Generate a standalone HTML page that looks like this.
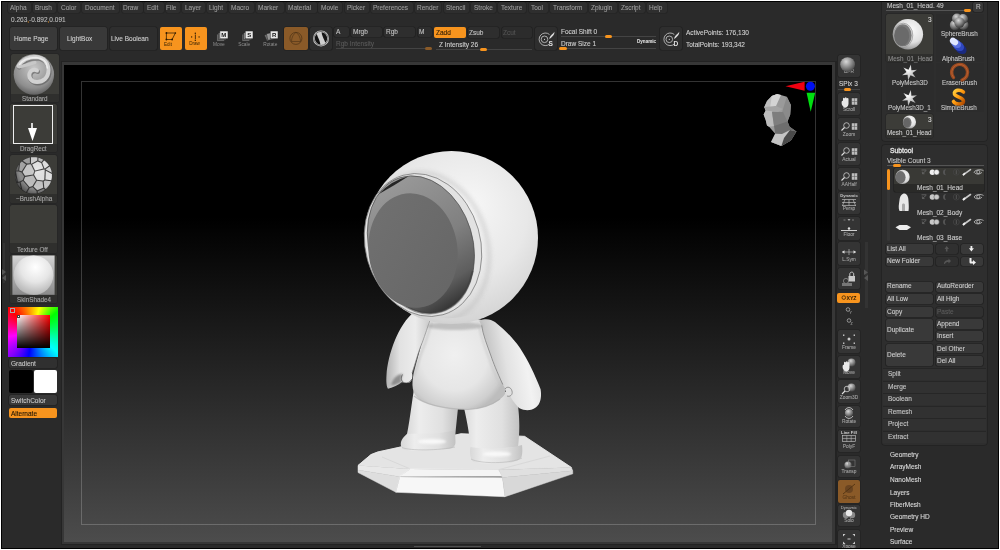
<!DOCTYPE html>
<html><head><meta charset="utf-8">
<style>
*{box-sizing:border-box;margin:0;padding:0}
html,body{width:1000px;height:550px;overflow:hidden;background:#fff}
body{position:relative;font-family:"Liberation Sans",sans-serif;color:#c4c4c4;font-size:6.5px;line-height:1}
.t{-webkit-text-stroke:0.1px currentColor;will-change:transform}
#app{position:absolute;left:1px;top:1px;width:998px;height:548px;background:#000}
#main{position:absolute;left:1px;top:1px;width:996px;height:546px;background:#2a2a2a;overflow:hidden}
.a{position:absolute}
.t{position:absolute;white-space:nowrap}
.menu{position:absolute;top:2px;height:11px;background:#2e2e2e;border-radius:2px;box-shadow:0 0 0 0.6px #222}
.mt{top:4.6px;color:#9c9c9c}
.btn{position:absolute;background:#393939;border-radius:2px;box-shadow:0 0 0 0.6px #1e1e1e}
.obtn{position:absolute;background:#f7941e;border-radius:2px}
.thumb{position:absolute;background:#3c3c38;border-radius:2px;overflow:hidden;box-shadow:0 0 0 0.5px #222}
.lab{position:absolute;left:0;right:0;bottom:0;background:#2f2f2d}
.lt{color:#a8a8a8;font-size:6.3px}
.lt2{color:#c8c8c8;font-size:6.5px}
.rsb{position:absolute;left:838px;width:22px;background:#343434;border-radius:2px;box-shadow:0 0 0 0.6px #202020}
.rsl{left:838px;width:22px;text-align:center;font-size:4.8px;color:#a0a0a0;margin-top:-0.8px}
.pan{position:absolute;left:882px;width:104.5px;background:#2e2e2e;border-radius:3px;box-shadow:0 0 0 0.8px #222}
.cell{position:absolute;width:48px;background:#2c2c2c;border-radius:2px}
.sb{position:absolute;background:#333;border-radius:2px}
</style></head><body>
<div id="app"><div id="main">
</div></div>

<!-- MENU -->
<div class="menu" style="left:8px;width:23px"></div><div class="t mt" style="left:9.9px">Alpha</div>
<div class="menu" style="left:33px;width:23px"></div><div class="t mt" style="left:34.9px">Brush</div>
<div class="menu" style="left:58px;width:22px"></div><div class="t mt" style="left:60.5px">Color</div>
<div class="menu" style="left:82px;width:37px"></div><div class="t mt" style="left:84.5px">Document</div>
<div class="menu" style="left:122px;width:21px"></div><div class="t mt" style="left:122.9px">Draw</div>
<div class="menu" style="left:144px;width:20px"></div><div class="t mt" style="left:146.7px">Edit</div>
<div class="menu" style="left:166px;width:14px"></div><div class="t mt" style="left:166.4px">File</div>
<div class="menu" style="left:182px;width:23px"></div><div class="t mt" style="left:184.5px">Layer</div>
<div class="menu" style="left:207px;width:20px"></div><div class="t mt" style="left:208.8px">Light</div>
<div class="menu" style="left:229px;width:25px"></div><div class="t mt" style="left:231.0px">Macro</div>
<div class="menu" style="left:256px;width:28px"></div><div class="t mt" style="left:258.4px">Marker</div>
<div class="menu" style="left:286px;width:31px"></div><div class="t mt" style="left:288.0px">Material</div>
<div class="menu" style="left:318px;width:24px"></div><div class="t mt" style="left:320.8px">Movie</div>
<div class="menu" style="left:345px;width:24px"></div><div class="t mt" style="left:346.9px">Picker</div>
<div class="menu" style="left:371px;width:42px"></div><div class="t mt" style="left:372.8px">Preferences</div>
<div class="menu" style="left:415px;width:26px"></div><div class="t mt" style="left:416.8px">Render</div>
<div class="menu" style="left:444px;width:25px"></div><div class="t mt" style="left:446.0px">Stencil</div>
<div class="menu" style="left:471px;width:25px"></div><div class="t mt" style="left:473.6px">Stroke</div>
<div class="menu" style="left:498px;width:28px"></div><div class="t mt" style="left:500.8px">Texture</div>
<div class="menu" style="left:529px;width:19px"></div><div class="t mt" style="left:531.0px">Tool</div>
<div class="menu" style="left:550px;width:37px"></div><div class="t mt" style="left:552.5px">Transform</div>
<div class="menu" style="left:589px;width:28px"></div><div class="t mt" style="left:590.9px">Zplugin</div>
<div class="menu" style="left:619px;width:26px"></div><div class="t mt" style="left:620.8px">Zscript</div>
<div class="menu" style="left:647px;width:20px"></div><div class="t mt" style="left:648.8px">Help</div>
<div class="t" style="left:11px;top:16.5px;color:#bdbdbd">0.263<span style="color:#e08a20">,</span>-0.892<span style="color:#e08a20">,</span>0.091</div>
<!-- TOP SHELF -->
<div class="btn" style="left:10px;top:27px;width:47px;height:23px"></div><div class="t" style="left:14px;top:36px;color:#d0d0d0">Home Page</div>
<div class="btn" style="left:60px;top:27px;width:47px;height:23px"></div><div class="t" style="left:67px;top:36px;color:#d0d0d0">LightBox</div>
<div class="btn" style="left:110px;top:27px;width:47px;height:23px;background:#2e2e2e"></div><div class="t" style="left:110.7px;top:36px;color:#d0d0d0">Live Boolean</div>
<div class="obtn" style="left:159.5px;top:27px;width:22.5px;height:23px"></div>
<div class="obtn" style="left:184.5px;top:27px;width:22.5px;height:23px"></div>
<div class="btn" style="left:284px;top:27px;width:23.5px;height:23px;background:#8a5a28"></div>
<div class="btn" style="left:309.6px;top:27px;width:22.4px;height:23px;background:#2e2e2e"></div>
<div class="btn" style="left:334.4px;top:26.5px;width:14.4px;height:10.5px;background:#2e2e2e"></div><div class="t" style="left:336px;top:29px">A</div>
<div class="btn" style="left:351.2px;top:26.5px;width:31.2px;height:10.5px;background:#2e2e2e"></div><div class="t" style="left:352.8px;top:29px">Mrgb</div>
<div class="btn" style="left:384px;top:26.5px;width:31.2px;height:10.5px;background:#2e2e2e"></div><div class="t" style="left:385.6px;top:29px">Rgb</div>
<div class="btn" style="left:417.6px;top:26.5px;width:14.4px;height:10.5px;background:#2e2e2e"></div><div class="t" style="left:418.9px;top:29px">M</div>
<div class="obtn" style="left:434.4px;top:27px;width:31.5px;height:10.6px"></div><div class="t" style="left:436px;top:29.5px;color:#2a1a05">Zadd</div>
<div class="btn" style="left:468px;top:27px;width:31px;height:10.6px;background:#2e2e2e"></div><div class="t" style="left:468.8px;top:30px">Zsub</div>
<div class="btn" style="left:501.6px;top:27px;width:30.4px;height:10.6px;background:#2c2c2c"></div><div class="t" style="left:502.9px;top:29.5px;color:#555">Zcut</div>
<div class="t" style="left:336px;top:40.5px;color:#5a5a5a">Rgb Intensity</div>
<div class="a" style="left:336px;top:47.5px;width:96px;height:1px;background:#444"></div>
<div class="a" style="left:424.8px;top:47px;width:7.2px;height:3px;background:#8a5a28;border-radius:1.5px"></div>
<div class="t" style="left:439.2px;top:42px;color:#d0d0d0">Z Intensity 26</div>
<div class="a" style="left:436px;top:49px;width:96px;height:1px;background:#444"></div>
<div class="a" style="left:480px;top:48px;width:7.2px;height:3px;background:#f7941e;border-radius:1.5px"></div>
<div class="btn" style="left:534.9px;top:27px;width:22.4px;height:23px;background:#2e2e2e"></div>
<div class="t" style="left:560.8px;top:28.5px;color:#d0d0d0">Focal Shift 0</div>
<div class="a" style="left:560.8px;top:36px;width:95px;height:1px;background:#444"></div>
<div class="a" style="left:604.8px;top:34.5px;width:7.5px;height:3.5px;background:#f7941e;border-radius:1.75px"></div>
<div class="t" style="left:560.8px;top:40.8px;color:#d0d0d0">Draw Size 1</div>
<div class="t" style="left:636.8px;top:40px;font-size:4.6px;font-weight:bold;color:#ddd">Dynamic</div>
<div class="a" style="left:560.8px;top:48px;width:95px;height:1px;background:#444"></div>
<div class="a" style="left:559.2px;top:47.2px;width:7.7px;height:3px;background:#f7941e;border-radius:1.5px"></div>
<div class="btn" style="left:659.7px;top:27px;width:22.7px;height:23px;background:#2e2e2e"></div>
<div class="t" style="left:685.9px;top:29.5px;color:#d0d0d0">ActivePoints: 176,130</div>
<div class="t" style="left:685.9px;top:41.5px;color:#d0d0d0">TotalPoints: 193,342</div>

<!-- CANVAS -->
<div class="a" style="left:60.5px;top:61px;width:776px;height:484px;background:#232323"></div>
<div class="a" style="left:61.5px;top:62px;width:773.5px;height:482px;background:#373737"></div>
<div class="a" style="left:64px;top:64.5px;width:768px;height:477px;background:linear-gradient(to bottom,#000 0%,#000 32%,#4c4c4c 100%)"></div>
<div class="a" style="left:80.5px;top:81px;width:735.5px;height:444px;border:1px solid rgba(255,255,255,0.2)"></div>
<div class="a" style="left:414px;top:545.8px;width:67px;height:1.6px;background:#505050"></div>

<!-- MODEL -->
<svg class="a" style="left:0;top:0" width="1000" height="550" viewBox="0 0 1000 550">
<defs>
<radialGradient id="gHead" cx="0.5" cy="0.4" r="0.7" fx="0.62" fy="0.3">
<stop offset="0" stop-color="#f6f6f6"/><stop offset="0.55" stop-color="#e8e8e8"/><stop offset="0.85" stop-color="#d6d6d6"/><stop offset="1" stop-color="#b8b8b8"/></radialGradient>
<linearGradient id="gDisc" x1="0.3" y1="0" x2="0.5" y2="1"><stop offset="0" stop-color="#9a9a9a"/><stop offset="0.55" stop-color="#808080"/><stop offset="0.85" stop-color="#5e5e5e"/><stop offset="1" stop-color="#383838"/></linearGradient>
<linearGradient id="gFace" x1="0" y1="0" x2="1" y2="1"><stop offset="0" stop-color="#717171"/><stop offset="1" stop-color="#656565"/></linearGradient>
<linearGradient id="gLeg" x1="0" y1="0" x2="1" y2="0"><stop offset="0" stop-color="#d8d8d8"/><stop offset="0.25" stop-color="#ededed"/><stop offset="0.7" stop-color="#e0e0e0"/><stop offset="1" stop-color="#c2c2c2"/></linearGradient>
<radialGradient id="gTorso" cx="0.45" cy="0.45" r="0.6"><stop offset="0" stop-color="#f0f0f0"/><stop offset="0.6" stop-color="#e6e6e6"/><stop offset="0.9" stop-color="#cfcfcf"/><stop offset="1" stop-color="#bdbdbd"/></radialGradient>
<linearGradient id="gArmL" x1="0" y1="0" x2="1" y2="0"><stop offset="0" stop-color="#b4b4b4"/><stop offset="0.3" stop-color="#e2e2e2"/><stop offset="0.65" stop-color="#ececec"/><stop offset="1" stop-color="#c8c8c8"/></linearGradient>
<linearGradient id="gArmR" x1="0" y1="0" x2="1" y2="-0.25"><stop offset="0" stop-color="#c0c0c0"/><stop offset="0.3" stop-color="#e2e2e2"/><stop offset="0.6" stop-color="#f2f2f2"/><stop offset="0.85" stop-color="#e2e2e2"/><stop offset="1" stop-color="#bcbcbc"/></linearGradient>
<clipPath id="cBot"><rect x="350" y="285" width="150" height="40"/></clipPath>
<clipPath id="cHead"><circle cx="451.5" cy="237.5" r="86.5"/></clipPath>
<filter id="blur1" x="-50%" y="-50%" width="200%" height="200%"><feGaussianBlur stdDeviation="1"/></filter>
<filter id="blur2" x="-20%" y="-20%" width="140%" height="140%"><feGaussianBlur stdDeviation="2"/></filter>
</defs>
<!-- base -->
<polygon points="358,465.5 371,454.6 377.7,452 461,433.8 524.6,436.4 571.4,467.5 498.6,469.7 410.2,468.9" fill="#e4e4e4" stroke="#e4e4e4" stroke-width="0.5" stroke-linejoin="round"/>
<path d="M358,465.5 L371,454.6 L377.7,452 L461,433.8 L524.6,436.4 L571.4,467.5" stroke="#f0f0f0" stroke-width="0.8" fill="none"/>
<path d="M410.2,468.9 L382,457 M498.6,469.7 L550,456" stroke="#d2d2d2" stroke-width="0.7"/>
<polygon points="358,465.5 410.2,468.9 399.8,476.7 358,470" fill="#e8e8e8" stroke="#e8e8e8" stroke-width="0.5" stroke-linejoin="round"/>
<polygon points="358,470 399.8,476.7 396,492.3 358,472.5" fill="#dedede" stroke="#dedede" stroke-width="0.5" stroke-linejoin="round"/>
<polygon points="410.2,468.9 498.6,469.7 502.5,476.3 399.8,476.2" fill="#f4f4f4" stroke="#f4f4f4" stroke-width="0.5" stroke-linejoin="round"/>
<polygon points="399.8,476.9 502.5,478 505,496.7 396,492.3" fill="#f7f7f7" stroke="#f7f7f7" stroke-width="0.5" stroke-linejoin="round"/>
<polygon points="498.6,469.7 571.4,467.5 572.7,470.8 502.5,477.5" fill="#e0e0e0" stroke="#e0e0e0" stroke-width="0.5" stroke-linejoin="round"/>
<polygon points="502.5,477.5 572.7,470.8 572.8,473.8 505,496.7" fill="#d8d8d8" stroke="#d8d8d8" stroke-width="0.5" stroke-linejoin="round"/>
<path d="M399.8,476.6 L502.5,477.6" stroke="#dcdcdc" stroke-width="0.7"/>
<!-- legs -->
<path d="M414.5,386 C412,400 410,420 407,434 C405,437 407,438 410,437 L455,437 L458,408 Z" fill="url(#gLeg)"/>
<path d="M407,434 C402,438 400,442 401,446 C402,449.5 405,450.6 412,450.8 L448,449 C453,448.4 455.5,446 455.5,442 L455,430 C440,435 420,433 407,434 Z" fill="url(#gLeg)"/>
<ellipse cx="432" cy="441.5" rx="14" ry="2.6" fill="#fbfbfb" filter="url(#blur1)" opacity="0.9"/><path d="M402,447.5 C410,451 440,450.5 455,447" stroke="#b8b8b8" stroke-width="1" fill="none" opacity="0.6"/>
<path d="M462,400 C466,415 470,435 470.5,450 L518,447 C520,430 520,415 516,392 L500,392 Z" fill="url(#gLeg)"/>
<path d="M470.5,447 C469.5,452 470,458 473,461.5 C476,463.5 490,464 500,463.5 C512,463 519,461 521.5,457 C522.5,454 522.5,449 522,445 C505,450 485,449 470.5,447 Z" fill="url(#gLeg)"/>
<ellipse cx="497" cy="454" rx="14" ry="2.6" fill="#fbfbfb" filter="url(#blur1)" opacity="0.9"/><path d="M471,459 C480,464 510,464 522,458" stroke="#b8b8b8" stroke-width="1" fill="none" opacity="0.6"/>
<!-- torso -->
<path d="M430,310 C426,330 418,355 414,372 C411,385 412,394 420,400 C430,406 445,409 468,409.5 C485,409 500,402 505,394 C507,385 500,370 494,355 C489,340 485,330 482,320 Z" fill="url(#gTorso)"/>
<!-- arms -->
<path d="M416,310 C406,318 399,330 395,340 C390,352 387,365 386.5,375 C386,382 386.5,387 388,388.8 C392,388 398,385 402,382 C404,383 407,383.5 409.5,382.5 C412,381 413,377 412,373 C415,365 418,352 422.5,342 C425,335 428,326 431,312 Z" fill="url(#gArmL)"/>
<path d="M391,385 C393,378 398,373.5 403,374 C401,377 400.5,380 402,382 C398,384.5 394,385.5 391,385 Z" fill="#7a7a7a" filter="url(#blur1)" opacity="0.8"/>
<path d="M402.5,374.5 C400.5,378 401,381.5 404.5,382.8 C407.5,383.5 410.5,382 412,379" stroke="#3a3a3a" stroke-width="0.6" fill="none"/>

<path d="M479.2,320.7 C486,318 491,319.5 495,322 C505,330 512,337 520,348 C528,360 535,375 540.6,389.2 C542,398 540,405 535,408 C530,411 525,411 519,408 C513,402 507,392 502.8,384.5 C497,372 493,362 491,356 C487,345 483,335 481.6,325.4 Z" fill="url(#gArmR)"/>
<path d="M505,389 C507,386 511,387 512,391 C513,395 510,397 507,396" stroke="#666" stroke-width="0.6" fill="#e0e0e0"/>
<path d="M430,320 C428,326 425,335 422.5,342 C418,352 415,365 412,373" stroke="#8a8a8a" stroke-width="0.7" fill="none"/><path d="M432,322 C429,330 427,338 424.5,345 C420,355 417,367 414,376" stroke="#c0c0c0" stroke-width="2.2" fill="none" opacity="0.6" filter="url(#blur1)"/>
<path d="M481.6,325.4 C483,335 487,345 491,356 C493,362 497,372 502.8,384.5" stroke="#7e7e7e" stroke-width="0.8" fill="none"/><path d="M479.5,327 C481,337 485,347 489,358 C491,364 495,374 500,385" stroke="#c4c4c4" stroke-width="2" fill="none" opacity="0.6" filter="url(#blur1)"/>
<ellipse cx="455" cy="326" rx="28" ry="4" fill="#a0a0a0" opacity="0.55" filter="url(#blur1)"/>
<path d="M414,396 C425,405 445,409 468,409.5 C480,409 492,405 500,399" stroke="#b0b0b0" stroke-width="1.2" fill="none" opacity="0.7"/>
<!-- head -->
<circle cx="451.5" cy="237.5" r="86.5" fill="url(#gHead)"/>
<ellipse cx="429" cy="247" rx="58.5" ry="75.5" transform="rotate(-16 429 247)" fill="none" stroke="#b8b8b8" stroke-width="3" filter="url(#blur2)" opacity="0.6" clip-path="url(#cHead)"/>
<ellipse cx="423" cy="245" rx="57.5" ry="72.5" transform="rotate(-16 423 245)" fill="#e2e2e2" stroke="#747474" stroke-width="0.7"/>
<ellipse cx="420.9" cy="244.5" rx="51.8" ry="70" transform="rotate(-17 420.9 244.5)" fill="url(#gDisc)" stroke="#505050" stroke-width="0.7"/>
<path d="M379,194 Q390,181 408.5,176.2 Q395,185 379,194 Z" fill="#262626"/>
<ellipse cx="420.9" cy="245.5" rx="51.3" ry="69" transform="rotate(-17 420.9 245.5)" fill="none" stroke="#3a3a3a" stroke-width="2.2" opacity="0.5" clip-path="url(#cBot)"/>
<ellipse cx="413" cy="250.5" rx="44.5" ry="57.5" transform="rotate(-7 413 250.5)" fill="url(#gFace)"/>
</svg>
<!-- LEFT SHELF -->
<div class="a" style="left:3px;top:243px;width:2px;height:40px;background:#333"></div>
<svg class="a" style="left:1px;top:268px" width="6" height="14"><path d="M1 1 L5 4 L1 7Z M5 7 L1 10 L5 13Z" fill="#555"/></svg>
<div class="thumb" style="left:10.5px;top:54.4px;width:48.5px;height:48px"><div class="lab" style="top:39.2px"></div></div>
<div class="t lt" style="left:21.9px;top:96px">Standard</div>
<div class="thumb" style="left:10px;top:104.4px;width:47.4px;height:48px"><div class="lab" style="top:39.4px"></div></div>
<div class="a" style="left:13.4px;top:105px;width:39.2px;height:38.6px;border:1.3px solid #eee"></div>
<svg class="a" style="left:27px;top:123px" width="11" height="19"><path d="M5 0 V12" stroke="#fff" stroke-width="1.6"/><path d="M1 5 L10 5 L5.5 18Z" fill="#fff"/></svg>
<div class="t lt" style="left:20.4px;top:146.3px">DragRect</div>
<div class="thumb" style="left:10px;top:155px;width:47.4px;height:48px"><div class="lab" style="top:38.6px"></div></div>
<div class="t lt" style="left:15.8px;top:196px">~BrushAlpha</div>
<div class="thumb" style="left:10px;top:204.7px;width:47.4px;height:48px"><div class="lab" style="top:38.4px"></div></div>
<div class="t lt" style="left:17.2px;top:246.5px">Texture Off</div>
<div class="thumb" style="left:10px;top:254.5px;width:47.4px;height:48px"><div class="lab" style="top:40.3px"></div></div>
<div class="t lt" style="left:16.7px;top:296.6px">SkinShade4</div>
<div class="a" style="left:8px;top:306.5px;width:50.4px;height:50.4px;background:conic-gradient(from -45deg at 50% 50%,#f00 0deg,#ff0 60deg,#0f0 95deg,#0ff 175deg,#00f 235deg,#80f 268deg,#f0f 304deg,#f00 360deg)"></div>
<div class="a" style="left:16.9px;top:314.9px;width:33.2px;height:33.2px;background:linear-gradient(to bottom,rgba(0,0,0,0),#000),linear-gradient(to right,#fff,#f00)"></div>
<div class="a" style="left:9.6px;top:307.6px;width:5.8px;height:5.8px;background:#f00;border:0.7px solid #aaa"></div>
<div class="a" style="left:17px;top:315px;width:3.2px;height:3.2px;border:0.6px solid #444;background:#fff"></div>
<div class="btn" style="left:9px;top:358px;width:48.4px;height:10px;background:#303030"></div><div class="t lt2" style="left:10.7px;top:360.5px">Gradient</div>
<div class="a" style="left:9px;top:370px;width:23.6px;height:23px;background:#000;border-radius:2px"></div>
<div class="a" style="left:34.4px;top:370px;width:23px;height:23px;background:#fff;border-radius:2px"></div>
<div class="btn" style="left:9px;top:395.4px;width:48.4px;height:9.6px;background:#393939"></div><div class="t lt2" style="left:10.7px;top:398.2px">SwitchColor</div>
<div class="obtn" style="left:9px;top:407.6px;width:48.4px;height:10.2px"></div><div class="t lt2" style="left:10.7px;top:410.5px;color:#1e1405">Alternate</div>

<!-- RIGHT SHELF -->
<div class="rsb" style="top:55px;height:22.0px;background:#343434"></div>
<div class="t rsl" style="top:70.8px;color:#a0a0a0">BPR</div>
<div class="rsb" style="top:93px;height:22.0px;background:#343434"></div>
<div class="t rsl" style="top:108.8px;color:#a0a0a0">Scroll</div>
<div class="rsb" style="top:118px;height:22.0px;background:#343434"></div>
<div class="t rsl" style="top:133.8px;color:#a0a0a0">Zoom</div>
<div class="rsb" style="top:143px;height:22.0px;background:#343434"></div>
<div class="t rsl" style="top:158.8px;color:#a0a0a0">Actual</div>
<div class="rsb" style="top:168px;height:22.0px;background:#343434"></div>
<div class="t rsl" style="top:183.8px;color:#a0a0a0">AAHalf</div>
<div class="rsb" style="top:191.5px;height:22.5px;background:#343434"></div>
<div class="t rsl" style="top:207.8px;color:#a0a0a0">Persp</div>
<div class="rsb" style="top:217px;height:22.8px;background:#343434"></div>
<div class="t rsl" style="top:233.6px;color:#a0a0a0">Floor</div>
<div class="rsb" style="top:242.3px;height:22.7px;background:#343434"></div>
<div class="t rsl" style="top:258.8px;color:#a0a0a0">L.Sym</div>
<div class="rsb" style="top:267.8px;height:21.6px;background:#343434"></div>
<div class="rsb" style="top:330px;height:23.4px;background:#343434"></div>
<div class="t rsl" style="top:347.2px;color:#a0a0a0">Frame</div>
<div class="rsb" style="top:355.5px;height:22.1px;background:#343434"></div>
<div class="t rsl" style="top:371.4px;color:#a0a0a0">Move</div>
<div class="rsb" style="top:380px;height:23.0px;background:#343434"></div>
<div class="t rsl" style="top:396.8px;color:#a0a0a0">Zoom3D</div>
<div class="rsb" style="top:405.6px;height:21.4px;background:#343434"></div>
<div class="t rsl" style="top:420.8px;color:#a0a0a0">Rotate</div>
<div class="rsb" style="top:429.5px;height:22.5px;background:#343434"></div>
<div class="t rsl" style="top:445.8px;color:#a0a0a0">PolyF</div>
<div class="rsb" style="top:455.5px;height:21.2px;background:#343434"></div>
<div class="t rsl" style="top:470.5px;color:#a0a0a0">Transp</div>
<div class="rsb" style="top:480.3px;height:22.4px;background:#8a5a28"></div>
<div class="t rsl" style="top:496.5px;color:#5a3a18">Ghost</div>
<div class="rsb" style="top:505px;height:21.4px;background:#343434"></div>
<div class="t rsl" style="top:520.2px;color:#a0a0a0">Solo</div>
<div class="rsb" style="top:530px;height:22.0px;background:#343434"></div>
<div class="t rsl" style="top:545.8px;color:#a0a0a0">Xpose</div>
<div class="t" style="left:839px;top:81px;color:#d0d0d0;font-size:6.5px">SPix 3</div>
<div class="a" style="left:838px;top:89px;width:22px;height:1px;background:#444"></div>
<div class="a" style="left:843.6px;top:88px;width:7.4px;height:3px;background:#f7941e;border-radius:1.5px"></div>
<div class="obtn" style="left:837.3px;top:293.2px;width:22.9px;height:9.4px"></div>
<div class="a" style="left:864.5px;top:242px;width:3.3px;height:66px;background:#333"></div>
<svg class="a" style="left:863px;top:269px" width="6" height="12"><path d="M1 0.5 L5 3.5 L1 6Z M5 6 L1 9 L5 12Z" fill="#555"/></svg>
<!-- TRAY -->
<div class="pan" style="top:-6px;height:146.6px"></div>
<div class="t" style="left:886.9px;top:2.5px;color:#c8c8c8;font-size:6.5px;">Mesh_01_Head. 49</div>
<div class="a" style="left:886px;top:10px;width:85px;height:1px;background:#555"></div>
<div class="a" style="left:963.6px;top:9.1px;width:7.7px;height:2.8px;background:#f7941e;border-radius:1.4px"></div>
<div class="btn" style="left:973.2px;top:2.1px;width:10px;height:9.8px;background:#393939"></div><div class="t" style="left:976px;top:3.9px;color:#bbb;font-size:6.5px;">R</div>
<div class="cell" style="left:936px;top:13.6px;height:48px"></div>
<div class="cell" style="left:885.6px;top:63px;height:49px"></div><div class="cell" style="left:936px;top:63px;height:49px"></div>
<div class="thumb" style="left:885.6px;top:13.6px;width:47.9px;height:48px"><div class="lab" style="top:40px"></div></div>
<div class="thumb" style="left:885.6px;top:113.5px;width:47.9px;height:24px"><div class="lab" style="top:15px"></div></div>
<div class="t" style="left:928px;top:16.9px;color:#ddd;font-size:6.5px;">3</div>
<div class="t" style="left:928.2px;top:117.2px;color:#ddd;font-size:6.5px;">3</div>
<div class="t" style="left:887.7px;top:55.5px;color:#8c8c8c;font-size:6.3px;">Mesh_01_Head</div>
<div class="t" style="left:887.3px;top:129.8px;color:#cfcfcf;font-size:6.3px;">Mesh_01_Head</div>
<div class="t" style="left:941px;top:30.5px;color:#c8c8c8;font-size:6.3px;">SphereBrush</div>
<div class="t" style="left:942px;top:55.8px;color:#c8c8c8;font-size:6.3px;">AlphaBrush</div>
<div class="t" style="left:891.5px;top:80.0px;color:#c8c8c8;font-size:6.3px;">PolyMesh3D</div>
<div class="t" style="left:941.7px;top:80.0px;color:#c8c8c8;font-size:6.3px;">EraserBrush</div>
<div class="t" style="left:888px;top:105.3px;color:#c8c8c8;font-size:6.3px;">PolyMesh3D_1</div>
<div class="t" style="left:941px;top:105.3px;color:#c8c8c8;font-size:6.3px;">SimpleBrush</div>
<div class="pan" style="top:145px;height:299.5px"></div>
<div class="t" style="left:889.9px;top:147.6px;color:#e4e4e4;font-size:6.8px;-webkit-text-stroke:0.3px #e4e4e4">Subtool</div>
<div class="t" style="left:886.8px;top:158.2px;color:#c8c8c8;font-size:6.5px;">Visible Count 3</div>
<div class="a" style="left:886.6px;top:165px;width:97.4px;height:1px;background:#555"></div>
<div class="a" style="left:893px;top:164px;width:8px;height:3px;background:#f7941e;border-radius:1.5px"></div>
<div class="a" style="left:886.8px;top:168.8px;width:3.3px;height:72px;background:#363636;border-radius:1.6px"></div>
<div class="a" style="left:886.8px;top:168.8px;width:3.3px;height:21.2px;background:#f7941e;border-radius:1.6px"></div>
<div class="a" style="left:893.75px;top:167.5px;width:90.25px;height:24.8px;background:#2a2a28;border-radius:2px;box-shadow:0 0 0 0.6px #1e1e1e"><div class="a" style="left:0;top:0;right:0;height:16px;background:#393935;border-radius:2px 2px 0 0"></div></div>
<div class="t" style="left:917.4px;top:185.3px;color:#d0d0d0;font-size:6.5px;">Mesh_01_Head</div>
<div class="t" style="left:917.4px;top:210.3px;color:#d0d0d0;font-size:6.5px;">Mesh_02_Body</div>
<div class="t" style="left:917.4px;top:234.9px;color:#d0d0d0;font-size:6.5px;">Mesh_03_Base</div>
<div class="btn" style="left:885.7px;top:243.9px;width:47.3px;height:9.9px;background:#393939"></div><div class="t" style="left:887.2px;top:245.7px;color:#d0d0d0;font-size:6.5px;">List All</div>
<div class="btn" style="left:935.6px;top:243.9px;width:22.9px;height:9.9px;background:#303030"></div>
<div class="btn" style="left:961px;top:243.9px;width:22.0px;height:9.9px;background:#393939"></div>
<div class="btn" style="left:885.7px;top:256.6px;width:47.3px;height:9.9px;background:#393939"></div><div class="t" style="left:887.2px;top:258.4px;color:#d0d0d0;font-size:6.5px;">New Folder</div>
<div class="btn" style="left:935.6px;top:256.6px;width:22.9px;height:9.9px;background:#303030"></div>
<div class="btn" style="left:961px;top:256.6px;width:22.0px;height:9.9px;background:#393939"></div>
<div class="btn" style="left:885.7px;top:281.5px;width:47.3px;height:10.1px;background:#393939"></div><div class="t" style="left:887.2px;top:283.4px;color:#d0d0d0;font-size:6.5px;">Rename</div>
<div class="btn" style="left:935.6px;top:281.5px;width:47.4px;height:10.1px;background:#393939"></div><div class="t" style="left:937.1px;top:283.4px;color:#d0d0d0;font-size:6.5px;">AutoReorder</div>
<div class="btn" style="left:885.7px;top:294.2px;width:47.3px;height:9.6px;background:#393939"></div><div class="t" style="left:887.2px;top:295.9px;color:#d0d0d0;font-size:6.5px;">All Low</div>
<div class="btn" style="left:935.6px;top:294.2px;width:47.4px;height:9.6px;background:#393939"></div><div class="t" style="left:937.1px;top:295.9px;color:#d0d0d0;font-size:6.5px;">All High</div>
<div class="btn" style="left:885.7px;top:306.9px;width:47.3px;height:9.7px;background:#393939"></div><div class="t" style="left:887.2px;top:308.6px;color:#d0d0d0;font-size:6.5px;">Copy</div>
<div class="btn" style="left:935.6px;top:306.9px;width:47.4px;height:9.7px;background:#303030"></div><div class="t" style="left:937.1px;top:308.6px;color:#5c5c5c;font-size:6.5px;">Paste</div>
<div class="btn" style="left:885.7px;top:319px;width:47.3px;height:22.2px;background:#393939"></div><div class="t" style="left:887.2px;top:327.0px;color:#d0d0d0;font-size:6.5px;">Duplicate</div>
<div class="btn" style="left:935.6px;top:319px;width:47.4px;height:9.5px;background:#393939"></div><div class="t" style="left:937.1px;top:320.6px;color:#d0d0d0;font-size:6.5px;">Append</div>
<div class="btn" style="left:935.6px;top:331px;width:47.4px;height:10.2px;background:#393939"></div><div class="t" style="left:937.1px;top:333.0px;color:#d0d0d0;font-size:6.5px;">Insert</div>
<div class="btn" style="left:885.7px;top:343.8px;width:47.3px;height:22.4px;background:#393939"></div><div class="t" style="left:887.2px;top:351.9px;color:#d0d0d0;font-size:6.5px;">Delete</div>
<div class="btn" style="left:935.6px;top:343.8px;width:47.4px;height:9.7px;background:#393939"></div><div class="t" style="left:937.1px;top:345.5px;color:#d0d0d0;font-size:6.5px;">Del Other</div>
<div class="btn" style="left:935.6px;top:356px;width:47.4px;height:10.2px;background:#393939"></div><div class="t" style="left:937.1px;top:358.0px;color:#d0d0d0;font-size:6.5px;">Del All</div>
<div class="a" style="left:882.5px;top:368.1px;width:103.5px;height:12px;background:#313131;border-top:0.6px solid #262626"></div>
<div class="t" style="left:887.7px;top:371.2px;color:#c8c8c8;font-size:6.5px;">Split</div>
<div class="a" style="left:882.5px;top:380.8px;width:103.5px;height:12px;background:#313131;border-top:0.6px solid #262626"></div>
<div class="t" style="left:887.7px;top:383.9px;color:#c8c8c8;font-size:6.5px;">Merge</div>
<div class="a" style="left:882.5px;top:393.1px;width:103.5px;height:12px;background:#313131;border-top:0.6px solid #262626"></div>
<div class="t" style="left:887.7px;top:396.2px;color:#c8c8c8;font-size:6.5px;">Boolean</div>
<div class="a" style="left:882.5px;top:405.5px;width:103.5px;height:12px;background:#313131;border-top:0.6px solid #262626"></div>
<div class="t" style="left:887.7px;top:408.6px;color:#c8c8c8;font-size:6.5px;">Remesh</div>
<div class="a" style="left:882.5px;top:418.3px;width:103.5px;height:12px;background:#313131;border-top:0.6px solid #262626"></div>
<div class="t" style="left:887.7px;top:421.4px;color:#c8c8c8;font-size:6.5px;">Project</div>
<div class="a" style="left:882.5px;top:430.6px;width:103.5px;height:12px;background:#313131;border-top:0.6px solid #262626"></div>
<div class="t" style="left:887.7px;top:433.7px;color:#c8c8c8;font-size:6.5px;">Extract</div>
<div class="t" style="left:889.5px;top:451.9px;color:#dcdcdc;font-size:6.5px;">Geometry</div>
<div class="t" style="left:889.5px;top:464.3px;color:#dcdcdc;font-size:6.5px;">ArrayMesh</div>
<div class="t" style="left:889.5px;top:476.9px;color:#dcdcdc;font-size:6.5px;">NanoMesh</div>
<div class="t" style="left:889.5px;top:489.6px;color:#dcdcdc;font-size:6.5px;">Layers</div>
<div class="t" style="left:889.5px;top:501.9px;color:#dcdcdc;font-size:6.5px;">FiberMesh</div>
<div class="t" style="left:889.5px;top:514.2px;color:#dcdcdc;font-size:6.5px;">Geometry HD</div>
<div class="t" style="left:889.5px;top:526.7px;color:#dcdcdc;font-size:6.5px;">Preview</div>
<div class="t" style="left:889.5px;top:539.3px;color:#dcdcdc;font-size:6.5px;">Surface</div>
<!-- ICONS -->
<svg class="a" style="left:0;top:0" width="1000" height="550" viewBox="0 0 1000 550">
<defs>
<radialGradient id="gTH" cx="0.62" cy="0.35" r="0.7"><stop offset="0" stop-color="#fafafa"/><stop offset="0.6" stop-color="#e0e0e0"/><stop offset="1" stop-color="#8a8a8a"/></radialGradient>
<radialGradient id="gGray" cx="0.4" cy="0.3" r="0.7"><stop offset="0" stop-color="#d8d8d8"/><stop offset="0.5" stop-color="#8a8a8a"/><stop offset="1" stop-color="#3a3a3a"/></radialGradient>
<radialGradient id="gStar" cx="0.4" cy="0.35" r="0.7"><stop offset="0" stop-color="#ffffff"/><stop offset="1" stop-color="#a0a0a0"/></radialGradient>
<radialGradient id="gBlue" cx="0.3" cy="0.2" r="0.9"><stop offset="0" stop-color="#e8ecff"/><stop offset="0.3" stop-color="#6a80e8"/><stop offset="0.7" stop-color="#3040b0"/><stop offset="1" stop-color="#101a60"/></radialGradient>
<linearGradient id="gOr" x1="0" y1="0" x2="1" y2="1"><stop offset="0" stop-color="#ffd040"/><stop offset="0.5" stop-color="#ff9a10"/><stop offset="1" stop-color="#b04a00"/></linearGradient>
<radialGradient id="gVorSh" cx="0.6" cy="0.35" r="0.7"><stop offset="0" stop-color="#fff" stop-opacity="0.15"/><stop offset="0.7" stop-color="#000" stop-opacity="0"/><stop offset="1" stop-color="#000" stop-opacity="0.45"/></radialGradient>
<linearGradient id="gSkinBg" x1="0" y1="0" x2="0" y2="1"><stop offset="0" stop-color="#d4d4d4"/><stop offset="1" stop-color="#8a8a8a"/></linearGradient>
<radialGradient id="gSkin" cx="0.55" cy="0.3" r="0.75"><stop offset="0" stop-color="#ffffff"/><stop offset="0.5" stop-color="#e6e6e6"/><stop offset="0.9" stop-color="#b8b8b8"/><stop offset="1" stop-color="#7a7a7a"/></radialGradient>
<radialGradient id="gStd" cx="0.5" cy="0.35" r="0.7"><stop offset="0" stop-color="#c8c8c8"/><stop offset="0.7" stop-color="#8e8e8e"/><stop offset="1" stop-color="#555"/></radialGradient>
</defs>
<!-- Mesh_01_Head thumb -->
<circle cx="907.9" cy="34.3" r="15.2" fill="url(#gTH)"/>
<ellipse cx="903.2" cy="35.2" rx="9.6" ry="12" fill="#d8d8d8" stroke="#777" stroke-width="0.5"/>
<ellipse cx="902.8" cy="35.4" rx="8.8" ry="11.2" fill="#7a7a7a"/>
<ellipse cx="901.8" cy="36" rx="7.4" ry="9.8" fill="#6a6a6a"/>
<!-- small head -->
<circle cx="909.4" cy="122" r="6.6" fill="url(#gTH)"/>
<ellipse cx="907.3" cy="122.5" rx="4.2" ry="5.3" fill="#777"/>
<ellipse cx="906.8" cy="122.8" rx="3.3" ry="4.4" fill="#666"/>
<!-- sphere brush -->
<circle cx="955" cy="25" r="5.2" fill="url(#gGray)"/>
<circle cx="963.5" cy="25" r="5" fill="url(#gGray)"/>
<circle cx="957" cy="18.5" r="5" fill="url(#gGray)"/>
<circle cx="963" cy="19" r="5" fill="url(#gGray)"/>
<circle cx="959.5" cy="22.5" r="5.2" fill="url(#gGray)"/>
<!-- alpha brush -->
<ellipse cx="961" cy="49" rx="6" ry="4.5" transform="rotate(35 961 49)" fill="#1a2a80"/>
<ellipse cx="958.5" cy="46" rx="6" ry="4.5" transform="rotate(35 958.5 46)" fill="#3048c0"/>
<ellipse cx="956" cy="43.5" rx="5.5" ry="4" transform="rotate(35 956 43.5)" fill="#5a70e0"/>
<ellipse cx="954" cy="41.5" rx="4.5" ry="3.2" transform="rotate(35 954 41.5)" fill="#dfe6ff"/>
<!-- stars -->
<polygon points="910.9,64.6 911.4,70.2 917.0,69.8 912.5,73.0 915.6,77.6 910.5,75.3 908.1,80.4 907.6,74.8 902.0,75.2 906.5,72.0 903.4,67.4 908.5,69.7" fill="url(#gStar)"/>
<polygon points="910.9,90.1 911.4,95.7 917.0,95.3 912.5,98.5 915.6,103.1 910.5,100.8 908.1,105.9 907.6,100.3 902.0,100.7 906.5,97.5 903.4,92.9 908.5,95.2" fill="url(#gStar)"/>
<!-- eraser ring -->
<path d="M953.5,77.5 A8,8 0 1 1 962,80" fill="none" stroke="#9a4a20" stroke-width="3.4" stroke-linecap="round"/>
<path d="M953.5,77.5 A8,8 0 1 1 962,80" fill="none" stroke="#d07040" stroke-width="0.9" stroke-linecap="round" opacity="0.6"/>
<!-- simple S -->
<path d="M963.5,92 C960,89 953.5,90 954.5,94 C955.5,97.5 964,97 963.5,101.5 C963,105 955,104.5 953.5,101.5" fill="none" stroke="url(#gOr)" stroke-width="3.6" stroke-linecap="round"/>
<!-- left shelf thumbs -->
<circle cx="33.9" cy="74.5" r="20.2" fill="url(#gStd)"/>
<g fill="none" stroke-linecap="round">
<path d="M18.5,66 C22,60 28,57 36,57 C44,57.5 48.5,63 48.5,70 C48.5,78 43,82 37,82 C31,82 28.5,77.5 29.5,73.5 C30.5,70 34,69 37,70.5" stroke="#5a5a5a" stroke-width="4.6" transform="translate(0.8,1.2)" opacity="0.6"/>
<path d="M18.5,66 C22,60 28,57 36,57 C44,57.5 48.5,63 48.5,70 C48.5,78 43,82 37,82 C31,82 28.5,77.5 29.5,73.5 C30.5,70 34,69 37,70.5" stroke="#d2d2d2" stroke-width="4"/>
<path d="M19.5,64.5 C23,59.5 29,57.5 36,57.5 C43,58 47,62 47.5,68" stroke="#ececec" stroke-width="1.4"/>
<path d="M19,67 C23,66 29,64.5 35,62.5" stroke="#c8c8c8" stroke-width="3"/>
</g>
<circle cx="33.7" cy="175.4" r="18.8" fill="#3a3a3a"/><path d="M43.4,168.4 L41.2,163.0 L37.7,161.6 L32.2,164.6 L35.1,170.5 L43.4,168.4Z" fill="rgb(230,230,230)"/><path d="M31.1,164.7 L30.3,164.3 L27.0,164.7 L22.6,171.9 L25.0,175.8 L33.1,174.4 L34.2,171.2 L31.1,164.7Z" fill="rgb(204,204,204)"/><path d="M31.0,163.4 L31.5,163.7 L37.2,160.6 L37.4,157.5 L37.3,157.5 L36.8,157.4 L36.4,157.3 L35.9,157.3 L35.5,157.2 L35.0,157.2 L34.6,157.2 L34.1,157.2 L33.7,157.2 L33.3,157.2 L32.8,157.2 L32.4,157.2 L31.9,157.2 L31.5,157.3 L31.0,157.3 L31.0,163.4Z" fill="rgb(211,211,211)"/><path d="M34.1,174.8 L36.9,179.7 L43.0,180.6 L44.3,179.7 L44.7,170.0 L44.5,169.5 L44.1,169.4 L35.2,171.6 L34.1,174.8Z" fill="rgb(230,230,230)"/><path d="M19.2,170.6 L21.7,171.3 L26.0,164.4 L21.9,161.5 L21.8,161.6 L21.4,161.9 L21.1,162.2 L20.8,162.5 L20.5,162.8 L20.2,163.1 L19.2,170.6Z" fill="rgb(166,166,166)"/><path d="M44.1,160.4 L42.2,162.7 L44.5,168.4 L44.9,168.5 L49.0,165.4 L48.9,165.3 L48.6,164.9 L48.4,164.5 L48.1,164.2 L47.8,163.8 L47.5,163.5 L47.2,163.1 L46.9,162.8 L46.6,162.5 L46.3,162.2 L46.0,161.9 L45.6,161.6 L45.3,161.3 L44.9,161.0 L44.6,160.7 L44.2,160.5 L44.1,160.4Z" fill="rgb(230,230,230)"/><path d="M23.8,180.3 L29.5,186.9 L32.5,186.1 L36.0,180.2 L33.2,175.5 L25.1,176.9 L23.8,180.3Z" fill="rgb(192,192,192)"/><path d="M22.8,160.8 L26.9,163.6 L29.9,163.3 L29.9,157.5 L29.7,157.6 L29.3,157.7 L28.8,157.8 L28.4,157.9 L28.0,158.1 L27.6,158.2 L27.1,158.4 L26.7,158.5 L26.3,158.7 L25.9,158.9 L25.5,159.1 L25.1,159.3 L24.7,159.5 L24.3,159.7 L23.9,160.0 L23.6,160.2 L23.2,160.5 L22.8,160.7 L22.8,160.8Z" fill="rgb(162,162,162)"/><path d="M51.3,180.2 L51.4,179.8 L51.5,179.4 L51.6,179.0 L51.7,178.5 L51.8,178.1 L51.8,177.6 L51.9,177.2 L51.9,176.7 L51.9,176.3 L51.9,175.8 L51.9,175.4 L51.9,175.0 L51.9,174.5 L51.9,174.1 L45.8,170.8 L45.4,179.5 L51.3,180.2Z" fill="rgb(230,230,230)"/><path d="M16.0,171.5 L17.9,181.7 L19.8,181.4 L22.7,180.0 L24.1,176.5 L21.6,172.4 L18.5,171.5 L16.0,171.5Z" fill="rgb(139,139,139)"/><path d="M38.3,160.6 L41.4,162.0 L43.2,159.8 L43.1,159.7 L42.7,159.5 L42.3,159.3 L41.9,159.1 L41.5,158.9 L41.1,158.7 L40.7,158.5 L40.3,158.4 L39.8,158.2 L39.4,158.1 L39.0,157.9 L38.6,157.8 L38.5,157.8 L38.3,160.6Z" fill="rgb(191,191,191)"/><path d="M43.2,187.7 L42.6,181.6 L36.9,180.8 L33.5,186.5 L37.3,190.3 L43.2,187.7Z" fill="rgb(198,198,198)"/><path d="M16.1,170.4 L18.1,170.4 L18.9,164.7 L18.8,164.9 L18.5,165.3 L18.3,165.6 L18.0,166.0 L17.8,166.4 L17.6,166.8 L17.4,167.2 L17.2,167.6 L17.0,168.0 L16.8,168.4 L16.7,168.8 L16.5,169.3 L16.4,169.7 L16.2,170.1 L16.1,170.4Z" fill="rgb(120,120,120)"/><path d="M45.6,169.3 L45.7,169.5 L51.8,172.8 L51.8,172.7 L51.7,172.3 L51.6,171.8 L51.5,171.4 L51.4,171.0 L51.3,170.5 L51.2,170.1 L51.0,169.7 L50.9,169.3 L50.7,168.8 L50.6,168.4 L50.4,168.0 L50.2,167.6 L50.0,167.2 L49.8,166.8 L49.6,166.4 L49.6,166.4 L45.6,169.3Z" fill="rgb(215,215,215)"/><path d="M22.4,189.7 L22.5,189.8 L22.8,190.1 L23.2,190.3 L23.6,190.6 L23.9,190.8 L24.3,191.1 L24.7,191.3 L25.1,191.5 L25.5,191.7 L25.9,191.9 L26.1,192.0 L28.6,187.6 L23.0,181.1 L20.6,182.3 L22.4,189.7Z" fill="rgb(136,136,136)"/><path d="M45.0,180.6 L43.7,181.4 L44.3,187.8 L45.7,189.1 L46.0,188.9 L46.3,188.6 L46.6,188.3 L46.9,188.0 L47.2,187.7 L47.5,187.3 L47.8,187.0 L48.1,186.6 L48.4,186.3 L48.6,185.9 L48.9,185.5 L49.1,185.2 L49.4,184.8 L49.6,184.4 L49.8,184.0 L50.0,183.6 L50.2,183.2 L50.4,182.8 L50.6,182.4 L50.7,182.0 L50.9,181.5 L51.0,181.2 L45.0,180.6Z" fill="rgb(199,199,199)"/><path d="M15.5,174.7 L15.5,175.0 L15.5,175.4 L15.5,175.8 L15.5,176.3 L15.5,176.7 L15.5,177.2 L15.6,177.6 L15.6,178.1 L15.7,178.5 L15.8,179.0 L15.9,179.4 L16.0,179.8 L16.1,180.3 L16.2,180.7 L16.4,181.1 L16.5,181.5 L16.7,182.0 L16.7,182.1 L16.8,182.0 L15.5,174.7Z" fill="rgb(120,120,120)"/><path d="M27.1,192.4 L27.1,192.4 L27.6,192.6 L28.0,192.7 L28.4,192.9 L28.8,193.0 L29.3,193.1 L29.7,193.2 L30.1,193.3 L30.6,193.4 L31.0,193.5 L31.5,193.5 L31.9,193.6 L32.4,193.6 L32.8,193.6 L33.3,193.6 L33.7,193.6 L34.1,193.6 L34.6,193.6 L35.0,193.6 L35.5,193.6 L35.9,193.5 L36.4,193.5 L36.7,193.4 L36.6,191.2 L32.7,187.2 L29.7,188.0 L27.1,192.4Z" fill="rgb(144,144,144)"/><path d="M17.1,183.1 L17.2,183.2 L17.4,183.6 L17.6,184.0 L17.8,184.4 L18.0,184.8 L18.3,185.2 L18.5,185.5 L18.8,185.9 L19.0,186.3 L19.3,186.6 L19.6,187.0 L19.9,187.3 L20.2,187.7 L20.5,188.0 L20.8,188.3 L20.9,188.4 L19.6,182.6 L17.6,182.9 L17.1,183.1Z" fill="rgb(120,120,120)"/><path d="M37.8,193.2 L38.1,193.1 L38.6,193.0 L39.0,192.9 L39.4,192.7 L39.8,192.6 L40.3,192.4 L40.7,192.3 L41.1,192.1 L41.5,191.9 L41.9,191.7 L42.3,191.5 L42.7,191.3 L43.1,191.1 L43.5,190.8 L43.8,190.6 L44.2,190.3 L44.6,190.1 L44.8,189.8 L43.7,188.7 L37.7,191.3 L37.8,193.2Z" fill="rgb(144,144,144)"/><circle cx="33.7" cy="175.4" r="18.8" fill="url(#gVorSh)"/>
<rect x="12.4" y="255.5" width="42.2" height="39.3" fill="url(#gSkinBg)"/><circle cx="33.5" cy="275.2" r="19.8" fill="url(#gSkin)"/>
</svg>

<!-- ICONS2 -->
<svg class="a" style="left:0;top:0" width="1000" height="550" viewBox="0 0 1000 550" font-family="Liberation Sans">
<!-- Edit / Draw -->
<g fill="none" stroke="#3a2405" stroke-width="0.8"><path d="M166.4,33 L175.4,33 L172.1,39.5 L166.4,39.5 Z"/></g>
<g fill="#2a1800"><circle cx="166.4" cy="33" r="0.9"/><circle cx="175.4" cy="33" r="0.8"/><circle cx="172.1" cy="39.5" r="0.9"/><circle cx="166.4" cy="39.5" r="0.9"/>
<circle cx="195.3" cy="33.3" r="0.7"/><rect x="194.9" y="34.5" width="0.8" height="4.5"/><circle cx="195.3" cy="40.3" r="0.7"/><rect x="191" y="36.4" width="1.2" height="1.1"/><rect x="198.5" y="36.4" width="1.2" height="1.1"/></g>
<text x="164" y="45.6" font-size="4.6" fill="#3a2405">Edit</text>
<text x="189.2" y="45.4" font-size="4.6" fill="#3a2405">Draw</text>
<!-- Move Scale Rotate -->
<g><rect x="216.8" y="34.1" width="7.7" height="7.1" fill="#6a6a6a" stroke="#222" stroke-width="0.5"/><rect x="218.3" y="32.6" width="7.7" height="7.1" fill="#8a8a8a" stroke="#222" stroke-width="0.5"/><rect x="219.9" y="31" width="8.1" height="7.8" fill="#e8e8e8" stroke="#222" stroke-width="0.5"/><text x="221.2" y="37.4" font-size="6" font-weight="bold" fill="#111">M</text></g>
<g><rect x="242" y="34.1" width="7.7" height="7.1" fill="#6a6a6a" stroke="#222" stroke-width="0.5"/><rect x="243.6" y="32.6" width="7.7" height="7.1" fill="#8a8a8a" stroke="#222" stroke-width="0.5"/><rect x="245.2" y="31" width="7.8" height="7.8" fill="#e8e8e8" stroke="#222" stroke-width="0.5"/><text x="247.2" y="37.4" font-size="6" font-weight="bold" fill="#111">S</text></g>
<g><rect x="265.5" y="33.5" width="7.5" height="6.5" transform="rotate(-25 269 37)" fill="#777" stroke="#222" stroke-width="0.5"/><rect x="267" y="32.8" width="7.5" height="6.8" transform="rotate(-12 271 36)" fill="#999" stroke="#222" stroke-width="0.5"/><rect x="270.2" y="31" width="7.8" height="7.8" fill="#e8e8e8" stroke="#222" stroke-width="0.5"/><text x="272.1" y="37.4" font-size="6" font-weight="bold" fill="#111">R</text></g>
<text x="213" y="45.5" font-size="4.8" fill="#909090">Move</text>
<text x="238.2" y="45.5" font-size="4.8" fill="#909090">Scale</text>
<text x="263.2" y="45.5" font-size="4.8" fill="#909090">Rotate</text>
<!-- material -->
<circle cx="295.9" cy="38.4" r="6" fill="none" stroke="#4a3015" stroke-width="0.7"/>
<path d="M291.5,41.5 C291.5,37 294,33.5 296,32.5 C298,33.5 300.5,37 300.5,41.5 Z" fill="none" stroke="#4a3015" stroke-width="0.6"/>
<!-- S icon -->
<circle cx="321" cy="38.4" r="8" fill="#cfcfcf"/>
<circle cx="321" cy="38.4" r="7" fill="none" stroke="#3a3a3a" stroke-width="0.6"/>
<g transform="translate(321 38.4)" fill="#141414">
<path d="M0.6,-6.1 A6.1,6.1 0 0 1 4.3,4.3 C3.6,2.2 2.4,0 1.7,-1.8 C1.1,-3.3 0.8,-4.6 0.6,-6.1 Z"/>
<path d="M-0.6,6.1 A6.1,6.1 0 0 1 -4.3,-4.3 C-3.6,-2.2 -2.4,0 -1.7,1.8 C-1.1,3.3 -0.8,4.6 -0.6,6.1 Z"/>
</g>
<!-- focal icons -->
<g fill="none" stroke="#c4c4c4" stroke-width="0.85">
<path d="M549.5,34.5 A6.3,6.3 0 1 0 549.6,44"/><circle cx="544.5" cy="39.3" r="3.3"/>
<path d="M674.3,34.5 A6.3,6.3 0 1 0 674.4,44"/><circle cx="669.3" cy="39.3" r="3.3"/></g>
<g fill="#dcdcdc"><circle cx="544.5" cy="39.3" r="0.6"/><circle cx="669.3" cy="39.3" r="0.6"/>
<path d="M549.2,39 C549.5,36.5 551.5,34.5 553,33.5 L554.5,31.8 L554.2,33.8 C553.5,35.5 551.5,38 549.2,39Z"/>
<path d="M674,39 C674.3,36.5 676.3,34.5 677.8,33.5 L679.3,31.8 L679,33.8 C678.3,35.5 676.3,38 674,39Z"/></g>
<text x="548.6" y="46" font-size="6.6" font-weight="bold" fill="#e0e0e0">S</text>
<text x="673.4" y="46" font-size="6.6" font-weight="bold" fill="#e0e0e0">D</text>
<!-- gizmo -->
<circle cx="810.4" cy="86.3" r="4.5" fill="#0010f0"/>
<polygon points="785.5,86.3 804.6,81.8 804.6,90.7" fill="#f00010"/>
<polygon points="806.6,92.7 815.2,92.7 810.7,111.8" fill="#00e010"/>
<polygon points="777.3,94.1 786.8,96.8 790.9,105 790.2,114.6 787.5,121.4 789.6,126.8 796.4,131.6 790.9,140.5 781.4,146 771.1,141.9 775.2,133.7 769.1,126.8 767,125.5 765.7,120 763.6,114.6 765.7,110.5 764.3,107 767,100.9 771.8,96.1" fill="#9a9a9a"/>
<polygon points="764.3,107 767,100.9 771.8,96.1 777.3,94.1 775,104 772,112 774,126 769.1,126.8 767,125.5 765.7,120 763.6,114.6 765.7,110.5" fill="#bdbdbd"/>
<polygon points="771.8,96.1 777.3,94.1 781,95 776,106 770,108" fill="#d4d4d4"/>
<polygon points="764.3,107 776,106 783,109 778,112 765.7,110.5" fill="#a4a4a4"/>
<polygon points="786.8,96.8 790.9,105 790.2,114.6 787.5,121.4 780,120 783,109" fill="#8a8a8a"/>
<polygon points="772,112 783,112 787.5,121.4 780,127 774,126" fill="#7e7e7e"/>
<polygon points="774,126 787.5,121.4 789.6,126.8 796.4,131.6 790.9,140.5 781.4,146 771.1,141.9 775.2,133.7" fill="#6e6e6e"/>
<polygon points="771.1,141.9 775.2,133.7 782,134 790,130 796.4,131.6 781.4,146" fill="#c4c4c4"/>
<polygon points="790,130 796.4,131.6 790.9,140.5 781.4,146 784,138" fill="#4a4a4a"/>
</svg>

<!-- SHELF ICONS -->
<svg class="a" style="left:0;top:0" width="1000" height="550" viewBox="0 0 1000 550">
<defs><radialGradient id="gBPR" cx="0.4" cy="0.3" r="0.7"><stop offset="0" stop-color="#d8d8d8"/><stop offset="1" stop-color="#4a4a4a"/></radialGradient></defs>
<circle cx="847.6" cy="64.6" r="7.4" fill="url(#gBPR)"/>
<rect x="851.5" y="98" width="6" height="7" fill="#bdbdbd" stroke="#222" stroke-width="0.4"/><path d="M854.5,98 V105 M851.5,101.5 H857.5" stroke="#555" stroke-width="0.5"/><path d="M842,105 C841,102 842,100 843,101 L843,98.5 C843,97.5 844.5,97.5 844.5,98.5 L845,97.8 C845.3,97 846.5,97 846.5,98 L847,98.5 C847.5,97.8 848.5,98 848.5,99 L848.5,104 C848,107 846,108 844,107.5 Z" fill="#e8e8e8"/>
<rect x="851.5" y="123" width="6" height="7" fill="#bdbdbd" stroke="#222" stroke-width="0.4"/><path d="M854.5,123 V130 M851.5,126.5 H857.5" stroke="#555" stroke-width="0.5"/><circle cx="846.5" cy="125.5" r="2.8" fill="none" stroke="#d0d0d0" stroke-width="0.8"/><path d="M844.5,127.5 L841.5,130.5" stroke="#e0e0e0" stroke-width="1.1"/>
<rect x="851.5" y="148" width="6" height="7" fill="#bdbdbd" stroke="#222" stroke-width="0.4"/><path d="M854.5,148 V155 M851.5,151.5 H857.5" stroke="#555" stroke-width="0.5"/><circle cx="846.5" cy="150.5" r="2.8" fill="none" stroke="#d0d0d0" stroke-width="0.8"/><path d="M844.5,152.5 L841.5,155.5" stroke="#e0e0e0" stroke-width="1.1"/>
<rect x="851.5" y="173" width="6" height="7" fill="#bdbdbd" stroke="#222" stroke-width="0.4"/><path d="M854.5,173 V180 M851.5,176.5 H857.5" stroke="#555" stroke-width="0.5"/><circle cx="846.5" cy="175.5" r="2.8" fill="none" stroke="#d0d0d0" stroke-width="0.8"/><path d="M844.5,177.5 L841.5,180.5" stroke="#e0e0e0" stroke-width="1.1"/>
<text x="849" y="197.2" font-size="4.2" font-weight="bold" fill="#c8c8c8" text-anchor="middle" font-family="Liberation Sans">Dynamic</text>
<path d="M842,199.5 H856 M842,202.5 H856 M842,205.5 H856 M845,199.5 L842.5,205.5 M849,199.5 V205.5 M853,199.5 L855.5,205.5" stroke="#d0d0d0" stroke-width="0.6" fill="none"/>
<rect x="843.5" y="219" width="2" height="2" fill="#555"/><rect x="852" y="219" width="2" height="2" fill="#555"/><path d="M847.5,219 L850.5,219 L849,221Z" fill="#aaa"/>
<path d="M841,230.5 H857" stroke="#d0d0d0" stroke-width="1"/><circle cx="849" cy="228.5" r="1.2" fill="#ddd"/>
<path d="M842,252 H856 M849,249 V255" stroke="#ccc" stroke-width="0.6"/><path d="M842,252 L844.5,250.3 V253.7Z M856,252 L853.5,250.3 V253.7Z" fill="#ddd"/>
<rect x="848.5" y="276" width="6.5" height="5.5" fill="#c8c8c8"/><path d="M849.8,276 V274 C849.8,271.5 853.7,271.5 853.7,274 V276" fill="none" stroke="#c8c8c8" stroke-width="1"/><circle cx="846" cy="281" r="2.6" fill="none" stroke="#999" stroke-width="0.7"/><rect x="842" y="283" width="10" height="3" fill="#777"/>
<text x="851.5" y="300.3" font-size="5.2" font-weight="bold" fill="#2a1a05" text-anchor="middle" font-family="Liberation Sans">XYZ</text><circle cx="843.8" cy="297.6" r="1.8" fill="none" stroke="#2a1a05" stroke-width="0.7"/>
<circle cx="848" cy="309.5" r="1.8" fill="none" stroke="#bbb" stroke-width="0.7"/><text x="849.5" y="313.5" font-size="3.6" fill="#bbb" font-family="Liberation Sans">Y</text>
<circle cx="849" cy="320.5" r="1.8" fill="none" stroke="#bbb" stroke-width="0.7"/><text x="850.5" y="324.5" font-size="3.6" fill="#bbb" font-family="Liberation Sans">Z</text>
<g fill="#ccc"><circle cx="849" cy="339" r="1.5"/><rect x="843" y="334.5" width="1.4" height="1.4"/><rect x="853.6" y="334.5" width="1.4" height="1.4"/><rect x="843" y="342.5" width="1.4" height="1.4"/><rect x="853.6" y="342.5" width="1.4" height="1.4"/></g>
<circle cx="851.5" cy="362.5" r="4" fill="url(#gBPR)"/><path d="M843,369 C842,366 843,364 844,365 L844,362.5 C844,361.5 845.5,361.5 845.5,362.5 L846,361.8 C846.3,361 847.5,361 847.5,362 L848,362.5 C848.5,361.8 849.5,362 849.5,363 L849.5,368 C849,371 847,372 845,371.5 Z" fill="#e8e8e8"/>
<circle cx="851.5" cy="387.5" r="4" fill="url(#gBPR)"/><circle cx="847" cy="389" r="2.8" fill="none" stroke="#d0d0d0" stroke-width="0.8"/><path d="M845,391 L842,394" stroke="#e0e0e0" stroke-width="1.1"/>
<circle cx="849" cy="413" r="4" fill="url(#gBPR)"/><path d="M845,410 A4.5,4.5 0 0 1 853,410 M853,416 A4.5,4.5 0 0 1 845,416" fill="none" stroke="#ddd" stroke-width="0.8"/>
<text x="849" y="433.5" font-size="4.2" font-weight="bold" fill="#d0d0d0" text-anchor="middle" font-family="Liberation Sans">Line Fill</text>
<rect x="842.5" y="435.5" width="13" height="6" fill="#3a3a3a" stroke="#ccc" stroke-width="0.6"/><path d="M846.8,435.5 V441.5 M851.2,435.5 V441.5 M842.5,438.5 H855.5" stroke="#ccc" stroke-width="0.5"/>
<circle cx="848" cy="465" r="3.6" fill="url(#gBPR)"/><rect x="848.5" y="460" width="6.5" height="6.5" fill="none" stroke="#888" stroke-width="0.5"/>
<circle cx="849" cy="489" r="4" fill="#6a4420"/><path d="M843,494 L855,484" stroke="#4a2e10" stroke-width="0.8"/>
<text x="849" y="508.5" font-size="4.2" fill="#bbb" text-anchor="middle" font-family="Liberation Sans">Dynamic</text>
<circle cx="846" cy="515" r="3.2" fill="#888"/><circle cx="852" cy="515" r="3.2" fill="#888"/><circle cx="849" cy="513" r="3.2" fill="#e8e8e8"/>
<g fill="#ccc"><path d="M843,534 L845.5,534 L843,536.5Z M855,534 L852.5,534 L855,536.5Z M843,544 L845.5,544 L843,541.5Z M855,544 L852.5,544 L855,541.5Z"/><rect x="847.5" y="538.5" width="3" height="1"/></g>
</svg>
<!-- SUBTOOL ICONS -->
<svg class="a" style="left:0;top:0" width="1000" height="550" viewBox="0 0 1000 550">
<defs><radialGradient id="gST" cx="0.65" cy="0.4" r="0.7"><stop offset="0" stop-color="#fafafa"/><stop offset="0.6" stop-color="#d8d8d8"/><stop offset="1" stop-color="#888"/></radialGradient></defs>
<path d="M926.5,170.2 L922.5,173.7 M922.5,173.7 L922.3,171.7 M922.5,173.7 L924.5,173.79999999999998 M921.5,170.0 H926" stroke="#6a6a6a" stroke-width="0.8" fill="none"/>
<circle cx="932.4" cy="172.2" r="2.7" fill="#f0f0f0"/><circle cx="936.6" cy="172.2" r="2.7" fill="#f0f0f0" stroke="#2a2a2a" stroke-width="0.4"/>
<path d="M946,169.2 A3,3 0 0 0 946,175.2 A5,5 0 0 1 946,169.2Z" fill="#555"/>
<circle cx="956.3" cy="172.2" r="3" fill="none" stroke="#444" stroke-width="0.8"/><path d="M956.3,170.2 V174.2" stroke="#555" stroke-width="1"/>
<path d="M963.5,174.7 L970.5,169.7" stroke="#c8c8c8" stroke-width="1.6" stroke-linecap="round"/><path d="M963,175.2 L965,173.2" stroke="#eee" stroke-width="1.8"/>
<path d="M974,172.2 C976,169.2 981,169.2 983.5,170.7 M974,172.2 C976,174.7 980,174.7 982,172.2" stroke="#c8c8c8" stroke-width="0.8" fill="none"/><circle cx="978.3" cy="172.0" r="1.6" fill="none" stroke="#c8c8c8" stroke-width="0.8"/>
<path d="M926.5,195 L922.5,198.5 M922.5,198.5 L922.3,196.5 M922.5,198.5 L924.5,198.6 M921.5,194.8 H926" stroke="#6a6a6a" stroke-width="0.8" fill="none"/>
<circle cx="932.4" cy="197" r="2.7" fill="#c8c8c8"/><circle cx="936.6" cy="197" r="2.7" fill="#c8c8c8" stroke="#2a2a2a" stroke-width="0.4"/>
<path d="M946,194.0 A3,3 0 0 0 946,200.0 A5,5 0 0 1 946,194.0Z" fill="#555"/>
<circle cx="956.3" cy="197" r="3" fill="none" stroke="#444" stroke-width="0.8"/><path d="M956.3,195 V199" stroke="#555" stroke-width="1"/>
<path d="M963.5,199.5 L970.5,194.5" stroke="#c8c8c8" stroke-width="1.6" stroke-linecap="round"/><path d="M963,200 L965,198" stroke="#eee" stroke-width="1.8"/>
<path d="M974,197 C976,194 981,194 983.5,195.5 M974,197 C976,199.5 980,199.5 982,197" stroke="#c8c8c8" stroke-width="0.8" fill="none"/><circle cx="978.3" cy="196.8" r="1.6" fill="none" stroke="#c8c8c8" stroke-width="0.8"/>
<path d="M926.5,220 L922.5,223.5 M922.5,223.5 L922.3,221.5 M922.5,223.5 L924.5,223.6 M921.5,219.8 H926" stroke="#6a6a6a" stroke-width="0.8" fill="none"/>
<circle cx="932.4" cy="222" r="2.7" fill="#c8c8c8"/><circle cx="936.6" cy="222" r="2.7" fill="#c8c8c8" stroke="#2a2a2a" stroke-width="0.4"/>
<path d="M946,219.0 A3,3 0 0 0 946,225.0 A5,5 0 0 1 946,219.0Z" fill="#555"/>
<circle cx="956.3" cy="222" r="3" fill="none" stroke="#444" stroke-width="0.8"/><path d="M956.3,220 V224" stroke="#555" stroke-width="1"/>
<path d="M963.5,224.5 L970.5,219.5" stroke="#c8c8c8" stroke-width="1.6" stroke-linecap="round"/><path d="M963,225 L965,223" stroke="#eee" stroke-width="1.8"/>
<path d="M974,222 C976,219 981,219 983.5,220.5 M974,222 C976,224.5 980,224.5 982,222" stroke="#c8c8c8" stroke-width="0.8" fill="none"/><circle cx="978.3" cy="221.8" r="1.6" fill="none" stroke="#c8c8c8" stroke-width="0.8"/>
<circle cx="902.5" cy="176.9" r="7.2" fill="url(#gST)"/><ellipse cx="900.6" cy="177.3" rx="5" ry="6.2" fill="#6e6e6e"/>
<path d="M899.5,211 C898,208 899,204 899.5,200 C900,196 902,193.6 904.5,193.6 C907,194 908.5,197 908.5,201 C908.8,205 909,208 908.5,211 Z" fill="#e8e8e8"/><path d="M902,211 L902,205 C902,203 905,203 905,205 L905,211" fill="#a8a8a8"/>
<polygon points="895.5,227.3 899.5,225 907,225 911,227.3 907,230 899.5,230" fill="#ececec"/>
<path d="M946.7,246 L944.5,249 H945.9 V251.5 H947.5 V249 H949Z" fill="#555"/>
<path d="M971.4,251.5 L968.9,248.3 H970.5 V246 H972.3 V248.3 H973.9Z" fill="#f0f0f0"/>
<path d="M944,264 C944,261 946,260 948.5,260 L948.5,258.6 L951,261 L948.5,263.4 L948.5,262 C946.5,262 945.5,262.5 945,264Z" fill="#555"/>
<path d="M969.5,258 V262 C969.5,263 970,263.5 971,263.5 L973,263.5 V265 L976,262.5 L973,260 V261.5 L971.5,261.5 V258Z" fill="#f0f0f0"/>
</svg>
<!-- BORDER OVERLAY -->
<div class="a" style="left:0;top:0;width:1000px;height:1px;background:#fff"></div>
<div class="a" style="left:0;top:549px;width:1000px;height:1px;background:#fff"></div>
<div class="a" style="left:0;top:0;width:1px;height:550px;background:#fff"></div>
<div class="a" style="left:999px;top:0;width:1px;height:550px;background:#fff"></div>
<div class="a" style="left:1px;top:1px;width:998px;height:1px;background:#000"></div>
<div class="a" style="left:1px;top:548px;width:998px;height:1px;background:#000"></div>
<div class="a" style="left:1px;top:1px;width:1px;height:548px;background:#000"></div>
<div class="a" style="left:998px;top:1px;width:1px;height:548px;background:#000"></div>

</body></html>
